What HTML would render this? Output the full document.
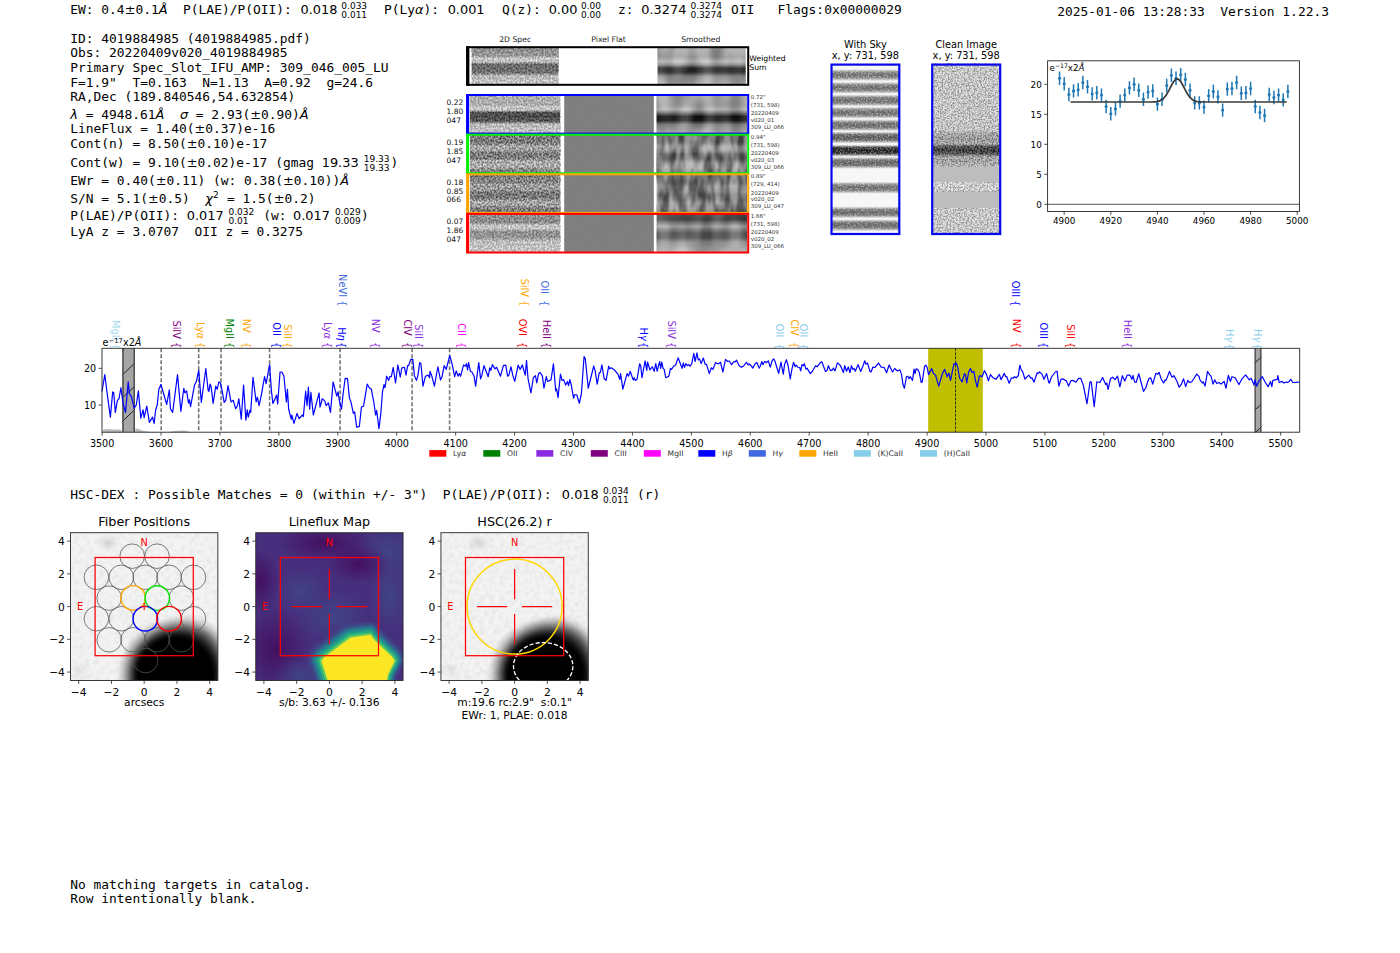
<!DOCTYPE html>
<html lang="en"><head><meta charset="utf-8"><title>HETDEX detection 4019884985</title>
<style>
html,body{margin:0;padding:0;background:#fff;}
body{width:1400px;height:953px;overflow:hidden;position:relative;}
svg{position:absolute;left:0;top:0;display:block;}
text{white-space:pre;}
.m{font-family:'DejaVu Sans Mono','Liberation Mono',monospace;font-size:12.9px;fill:#000;}
.s{font-family:'DejaVu Sans','Liberation Sans',sans-serif;fill:#000;}
.i{font-family:'DejaVu Sans','Liberation Sans',sans-serif;font-style:italic;}
</style></head><body>
<svg width="1400" height="953" viewBox="0 0 1400 953">
<text x="70.30" y="14.00" class="m"><tspan dx="0">EW: 0.4</tspan><tspan class="s" font-size="12.9" dx="0">±</tspan><tspan dx="0">0.1</tspan><tspan class="i" font-size="12.9">Å</tspan><tspan dx="0">  P(LAE)/P(OII): </tspan><tspan class="s" font-size="12.9" dx="1.0">0.018</tspan></text>
<text x="341.30" y="9.20" class="s" font-size="9.03">0.033</text><text x="341.30" y="18.20" class="s" font-size="9.03">0.011</text>
<text x="384.00" y="14.00" class="m"><tspan dx="0">P(Ly</tspan><tspan class="i" font-size="12.9">α</tspan><tspan dx="0">): </tspan><tspan class="s" font-size="12.9" dx="0.8">0.001</tspan><tspan dx="2.0">  Q(z): </tspan><tspan class="s" font-size="12.9" dx="0">0.00</tspan></text>
<text x="581.00" y="9.20" class="s" font-size="9.03">0.00</text><text x="581.00" y="18.20" class="s" font-size="9.03">0.00</text>
<text x="618.00" y="14.00" class="m"><tspan dx="0">z: </tspan><tspan class="s" font-size="12.9" dx="0">0.3274</tspan></text>
<text x="690.50" y="9.20" class="s" font-size="9.03">0.3274</text><text x="690.50" y="18.20" class="s" font-size="9.03">0.3274</text>
<text x="731.00" y="14.00" class="m"><tspan dx="0">OII   Flags:0x00000029</tspan></text>
<text x="1057.30" y="16.10" class="m"><tspan dx="0">2025-01-06 13:28:33  Version 1.22.3</tspan></text>
<text x="70.30" y="42.50" class="m"><tspan dx="0">ID: 4019884985 (4019884985.pdf)</tspan></text>
<text x="70.30" y="57.20" class="m"><tspan dx="0">Obs: 20220409v020_4019884985</tspan></text>
<text x="70.30" y="71.90" class="m"><tspan dx="0">Primary Spec_Slot_IFU_AMP: 309_046_005_LU</tspan></text>
<text x="70.30" y="86.60" class="m"><tspan dx="0">F=1.9"  T=0.163  N=1.13  A=0.92  g=24.6</tspan></text>
<text x="70.30" y="101.30" class="m"><tspan dx="0">RA,Dec (189.840546,54.632854)</tspan></text>
<text x="70.30" y="118.70" class="m"><tspan class="i" font-size="12.9">λ</tspan><tspan dx="0"> = 4948.61</tspan><tspan class="i" font-size="12.9">Å</tspan><tspan dx="0">  </tspan><tspan class="i" font-size="12.9">σ</tspan><tspan dx="0"> = 2.93(</tspan><tspan class="s" font-size="12.9" dx="0">±</tspan><tspan dx="0">0.90)</tspan><tspan class="i" font-size="12.9">Å</tspan></text>
<text x="70.30" y="133.30" class="m"><tspan dx="0">LineFlux = 1.40(</tspan><tspan class="s" font-size="12.9" dx="0">±</tspan><tspan dx="0">0.37)e-16</tspan></text>
<text x="70.30" y="148.00" class="m"><tspan dx="0">Cont(n) = 8.50(</tspan><tspan class="s" font-size="12.9" dx="0">±</tspan><tspan dx="0">0.10)e-17</tspan></text>
<text x="70.30" y="166.90" class="m"><tspan dx="0">Cont(w) = 9.10(</tspan><tspan class="s" font-size="12.9" dx="0">±</tspan><tspan dx="0">0.02)e-17 (gmag </tspan><tspan class="s" font-size="12.9" dx="0">19.33</tspan></text>
<text x="363.70" y="162.10" class="s" font-size="9.03">19.33</text><text x="363.70" y="171.10" class="s" font-size="9.03">19.33</text>
<text x="390.50" y="166.90" class="m"><tspan dx="0">)</tspan></text>
<text x="70.30" y="184.50" class="m"><tspan dx="0">EWr = 0.40(</tspan><tspan class="s" font-size="12.9" dx="0">±</tspan><tspan dx="0">0.11) (w: 0.38(</tspan><tspan class="s" font-size="12.9" dx="0">±</tspan><tspan dx="0">0.10))</tspan><tspan class="i" font-size="12.9">Å</tspan></text>
<text x="70.30" y="202.50" class="m"><tspan dx="0">S/N = 5.1(</tspan><tspan class="s" font-size="12.9" dx="0">±</tspan><tspan dx="0">0.5)  </tspan><tspan class="i" font-size="12.9">χ</tspan><tspan class="s" font-size="9.03" dy="-4.7">2</tspan><tspan dy="4.7" font-size="1"> </tspan><tspan dx="0"> = 1.5(</tspan><tspan class="s" font-size="12.9" dx="0">±</tspan><tspan dx="0">0.2)</tspan></text>
<text x="70.30" y="219.60" class="m"><tspan dx="0">P(LAE)/P(OII): </tspan><tspan class="s" font-size="12.9" dx="0">0.017</tspan></text>
<text x="228.50" y="214.80" class="s" font-size="9.03">0.032</text><text x="228.50" y="223.80" class="s" font-size="9.03">0.01</text>
<text x="263.20" y="219.60" class="m"><tspan dx="0">(w: </tspan><tspan class="s" font-size="12.9" dx="-1.2">0.017</tspan></text>
<text x="335.00" y="214.80" class="s" font-size="9.03">0.029</text><text x="335.00" y="223.80" class="s" font-size="9.03">0.009</text>
<text x="361.00" y="219.60" class="m"><tspan dx="0">)</tspan></text>
<text x="70.30" y="236.30" class="m"><tspan dx="0">LyA z = 3.0707  OII z = 0.3275</tspan></text>
<text x="70.30" y="498.50" class="m"><tspan dx="0">HSC-DEX : Possible Matches = 0 (within +/- 3")  P(LAE)/P(OII): </tspan><tspan class="s" font-size="12.9" dx="2.6">0.018</tspan></text>
<text x="603.00" y="493.70" class="s" font-size="9.03">0.034</text><text x="603.00" y="502.70" class="s" font-size="9.03">0.011</text>
<text x="637.00" y="498.50" class="m"><tspan dx="0">(r)</tspan></text>
<text x="70.30" y="888.50" class="m"><tspan dx="0">No matching targets in catalog.</tspan></text>
<text x="70.30" y="903.20" class="m"><tspan dx="0">Row intentionally blank.</tspan></text>
<g id="cutouts"><defs>
<filter id="nzA" x="0" y="0" width="100%" height="100%" color-interpolation-filters="sRGB"><feTurbulence type="fractalNoise" baseFrequency="0.55 0.5" numOctaves="2" seed="7"/><feColorMatrix type="matrix" values="3.0 0 0 0 -1.0  3.0 0 0 0 -1.0  3.0 0 0 0 -1.0  0 0 0 0 0.36"/></filter>
<filter id="nzB" x="0" y="0" width="100%" height="100%" color-interpolation-filters="sRGB"><feTurbulence type="fractalNoise" baseFrequency="0.55 0.5" numOctaves="2" seed="23"/><feColorMatrix type="matrix" values="3.0 0 0 0 -1.0  3.0 0 0 0 -1.0  3.0 0 0 0 -1.0  0 0 0 0 0.24"/></filter>
<filter id="nzS" x="0" y="0" width="100%" height="100%" color-interpolation-filters="sRGB"><feTurbulence type="fractalNoise" baseFrequency="0.13 0.045" numOctaves="2" seed="11"/><feColorMatrix type="matrix" values="2.4 0 0 0 -0.7  2.4 0 0 0 -0.7  2.4 0 0 0 -0.7  0 0 0 0 0.34"/></filter>
<filter id="nzS2" x="0" y="0" width="100%" height="100%" color-interpolation-filters="sRGB"><feTurbulence type="fractalNoise" baseFrequency="0.07 0.03" numOctaves="1" seed="4"/><feColorMatrix type="matrix" values="3.0 0 0 0 -1.0  3.0 0 0 0 -1.0  3.0 0 0 0 -1.0  0 0 0 0 0.2"/></filter>
<filter id="nzF" x="0" y="0" width="100%" height="100%" color-interpolation-filters="sRGB"><feTurbulence type="fractalNoise" baseFrequency="0.7" numOctaves="1" seed="2"/><feColorMatrix type="matrix" values="1 0 0 0 0  1 0 0 0 0  1 0 0 0 0  0 0 0 0 0.06"/></filter>
</defs>
<defs><linearGradient id="d2w" x1="0" y1="0" x2="0" y2="1"><stop offset="0.000" stop-color="#969696"/><stop offset="0.220" stop-color="#9b9b9b"/><stop offset="0.300" stop-color="#e1e1e1"/><stop offset="0.380" stop-color="#d7d7d7"/><stop offset="0.460" stop-color="#646464"/><stop offset="0.680" stop-color="#696969"/><stop offset="0.760" stop-color="#c8c8c8"/><stop offset="1.000" stop-color="#dedede"/></linearGradient><linearGradient id="d2b" x1="0" y1="0" x2="0" y2="1"><stop offset="0.000" stop-color="#bebebe"/><stop offset="0.250" stop-color="#b9b9b9"/><stop offset="0.320" stop-color="#dedede"/><stop offset="0.390" stop-color="#d7d7d7"/><stop offset="0.460" stop-color="#3c3c3c"/><stop offset="0.680" stop-color="#464646"/><stop offset="0.760" stop-color="#cdcdcd"/><stop offset="1.000" stop-color="#d7d7d7"/></linearGradient><linearGradient id="d2g" x1="0" y1="0" x2="0" y2="1"><stop offset="0.000" stop-color="#787878"/><stop offset="0.200" stop-color="#737373"/><stop offset="0.300" stop-color="#bebebe"/><stop offset="0.400" stop-color="#b4b4b4"/><stop offset="0.480" stop-color="#787878"/><stop offset="0.620" stop-color="#7d7d7d"/><stop offset="0.700" stop-color="#c8c8c8"/><stop offset="0.840" stop-color="#c3c3c3"/><stop offset="0.920" stop-color="#878787"/><stop offset="1.000" stop-color="#828282"/></linearGradient><linearGradient id="d2o" x1="0" y1="0" x2="0" y2="1"><stop offset="0.000" stop-color="#7d7d7d"/><stop offset="0.200" stop-color="#828282"/><stop offset="0.280" stop-color="#afafaf"/><stop offset="0.400" stop-color="#aaaaaa"/><stop offset="0.480" stop-color="#6e6e6e"/><stop offset="0.620" stop-color="#737373"/><stop offset="0.700" stop-color="#b9b9b9"/><stop offset="0.820" stop-color="#b4b4b4"/><stop offset="0.900" stop-color="#787878"/><stop offset="1.000" stop-color="#787878"/></linearGradient><linearGradient id="d2r" x1="0" y1="0" x2="0" y2="1"><stop offset="0.000" stop-color="#969696"/><stop offset="0.220" stop-color="#8c8c8c"/><stop offset="0.300" stop-color="#dedede"/><stop offset="0.380" stop-color="#d7d7d7"/><stop offset="0.460" stop-color="#969696"/><stop offset="0.620" stop-color="#9b9b9b"/><stop offset="0.720" stop-color="#d2d2d2"/><stop offset="1.000" stop-color="#dadada"/></linearGradient><linearGradient id="smw" x1="0" y1="0" x2="0" y2="1"><stop offset="0.000" stop-color="#a5a5a5"/><stop offset="0.250" stop-color="#969696"/><stop offset="0.380" stop-color="#bebebe"/><stop offset="0.460" stop-color="#969696"/><stop offset="0.560" stop-color="#282828"/><stop offset="0.660" stop-color="#2d2d2d"/><stop offset="0.780" stop-color="#969696"/><stop offset="1.000" stop-color="#b9b9b9"/></linearGradient><linearGradient id="smb" x1="0" y1="0" x2="0" y2="1"><stop offset="0.000" stop-color="#aaaaaa"/><stop offset="0.250" stop-color="#a0a0a0"/><stop offset="0.380" stop-color="#b9b9b9"/><stop offset="0.460" stop-color="#787878"/><stop offset="0.560" stop-color="#121212"/><stop offset="0.660" stop-color="#161616"/><stop offset="0.780" stop-color="#8c8c8c"/><stop offset="1.000" stop-color="#b4b4b4"/></linearGradient><linearGradient id="smg" x1="0" y1="0" x2="0" y2="1"><stop offset="0.000" stop-color="#5f5f5f"/><stop offset="0.180" stop-color="#5a5a5a"/><stop offset="0.320" stop-color="#969696"/><stop offset="0.420" stop-color="#8c8c8c"/><stop offset="0.520" stop-color="#5f5f5f"/><stop offset="0.620" stop-color="#646464"/><stop offset="0.740" stop-color="#969696"/><stop offset="0.860" stop-color="#969696"/><stop offset="1.000" stop-color="#6e6e6e"/></linearGradient><linearGradient id="smo" x1="0" y1="0" x2="0" y2="1"><stop offset="0.000" stop-color="#646464"/><stop offset="0.200" stop-color="#6e6e6e"/><stop offset="0.320" stop-color="#8c8c8c"/><stop offset="0.440" stop-color="#7d7d7d"/><stop offset="0.540" stop-color="#5f5f5f"/><stop offset="0.640" stop-color="#696969"/><stop offset="0.760" stop-color="#8c8c8c"/><stop offset="0.880" stop-color="#828282"/><stop offset="1.000" stop-color="#646464"/></linearGradient><linearGradient id="smr" x1="0" y1="0" x2="0" y2="1"><stop offset="0.000" stop-color="#464646"/><stop offset="0.140" stop-color="#3c3c3c"/><stop offset="0.240" stop-color="#787878"/><stop offset="0.320" stop-color="#a5a5a5"/><stop offset="0.400" stop-color="#828282"/><stop offset="0.500" stop-color="#555555"/><stop offset="0.620" stop-color="#5a5a5a"/><stop offset="0.740" stop-color="#969696"/><stop offset="1.000" stop-color="#b9b9b9"/></linearGradient></defs>
<text x="515.2" y="41.8" text-anchor="middle" class="s" font-size="7.7" style="fill:#222">2D Spec</text>
<text x="608.6" y="41.8" text-anchor="middle" class="s" font-size="7.7" style="fill:#222">Pixel Flat</text>
<text x="700.8" y="41.8" text-anchor="middle" class="s" font-size="7.7" style="fill:#222">Smoothed</text>
<rect x="471.6" y="47.5" width="87.0" height="37" fill="url(#d2w)"/><rect x="471.6" y="47.5" width="87.0" height="37" filter="url(#nzB)"/>
<rect x="657.6" y="47.5" width="88.0" height="37" fill="url(#smw)"/><rect x="657.6" y="47.5" width="88.0" height="37" filter="url(#nzS2)"/>
<rect x="467.2" y="47.2" width="281.0" height="37.6" fill="none" stroke="#000" stroke-width="2"/>
<rect x="466.2" y="46.2" width="3.2" height="39.6" fill="#000"/>
<text x="749.3" y="61.2" class="s" font-size="7.7">Weighted</text><text x="749.3" y="69.6" class="s" font-size="7.7">Sum</text>
<rect x="470.0" y="95.2" width="90.2" height="38.0" fill="url(#d2b)"/><rect x="470.0" y="95.2" width="90.2" height="38.0" filter="url(#nzB)"/>
<rect x="564.2" y="95.2" width="89.6" height="38.0" fill="#7f7f7f"/><rect x="564.2" y="95.2" width="89.6" height="38.0" filter="url(#nzF)"/>
<rect x="656.6" y="95.2" width="90.4" height="38.0" fill="url(#smb)"/><rect x="656.6" y="95.2" width="90.4" height="38.0" filter="url(#nzS2)"/>
<rect x="470.0" y="134.89999999999998" width="90.2" height="38.0" fill="url(#d2g)"/><rect x="470.0" y="134.89999999999998" width="90.2" height="38.0" filter="url(#nzA)"/>
<rect x="564.2" y="134.9" width="89.6" height="38.0" fill="#7f7f7f"/><rect x="564.2" y="134.9" width="89.6" height="38.0" filter="url(#nzF)"/>
<rect x="656.6" y="134.89999999999998" width="90.4" height="38.0" fill="url(#smg)"/><rect x="656.6" y="134.89999999999998" width="90.4" height="38.0" filter="url(#nzS)"/>
<rect x="470.0" y="174.5" width="90.2" height="38.0" fill="url(#d2o)"/><rect x="470.0" y="174.5" width="90.2" height="38.0" filter="url(#nzA)"/>
<rect x="564.2" y="174.5" width="89.6" height="38.0" fill="#7f7f7f"/><rect x="564.2" y="174.5" width="89.6" height="38.0" filter="url(#nzF)"/>
<rect x="656.6" y="174.5" width="90.4" height="38.0" fill="url(#smo)"/><rect x="656.6" y="174.5" width="90.4" height="38.0" filter="url(#nzS)"/>
<rect x="470.0" y="214.1" width="90.2" height="38.0" fill="url(#d2r)"/><rect x="470.0" y="214.1" width="90.2" height="38.0" filter="url(#nzB)"/>
<rect x="564.2" y="214.1" width="89.6" height="38.0" fill="#7f7f7f"/><rect x="564.2" y="214.1" width="89.6" height="38.0" filter="url(#nzF)"/>
<rect x="656.6" y="214.1" width="90.4" height="38.0" fill="url(#smr)"/><rect x="656.6" y="214.1" width="90.4" height="38.0" filter="url(#nzS2)"/>
<rect x="467.2" y="95.0" width="281.0" height="38.6" fill="none" stroke="#0000ff" stroke-width="2"/>
<rect x="466.2" y="94.0" width="3" height="40.2" fill="#0000ff"/>
<text x="446.6" y="105.4" class="s" font-size="7.5" style="fill:#111">0.22</text>
<text x="446.6" y="114.2" class="s" font-size="7.5" style="fill:#111">1.80</text>
<text x="446.6" y="123.0" class="s" font-size="7.5" style="fill:#111">047</text>
<text x="750.8" y="98.9" class="s" font-size="5.5" style="fill:#333">0.72"</text>
<text x="750.8" y="106.8" class="s" font-size="5.5" style="fill:#333">(731, 598)</text>
<text x="750.8" y="115.2" class="s" font-size="5.5" style="fill:#333">20220409</text>
<text x="750.8" y="121.8" class="s" font-size="5.5" style="fill:#333">v020_01</text>
<text x="750.8" y="128.9" class="s" font-size="5.5" style="fill:#333">309_LU_066</text>
<rect x="467.2" y="134.7" width="281.0" height="38.6" fill="none" stroke="#05f005" stroke-width="2"/>
<rect x="466.2" y="133.7" width="3" height="40.2" fill="#05f005"/>
<text x="446.6" y="145.1" class="s" font-size="7.5" style="fill:#111">0.19</text>
<text x="446.6" y="153.9" class="s" font-size="7.5" style="fill:#111">1.85</text>
<text x="446.6" y="162.7" class="s" font-size="7.5" style="fill:#111">047</text>
<text x="750.8" y="138.6" class="s" font-size="5.5" style="fill:#333">0.94"</text>
<text x="750.8" y="146.5" class="s" font-size="5.5" style="fill:#333">(731, 598)</text>
<text x="750.8" y="154.9" class="s" font-size="5.5" style="fill:#333">20220409</text>
<text x="750.8" y="161.5" class="s" font-size="5.5" style="fill:#333">v020_03</text>
<text x="750.8" y="168.6" class="s" font-size="5.5" style="fill:#333">309_LU_066</text>
<rect x="467.2" y="174.3" width="281.0" height="38.6" fill="none" stroke="#ffa500" stroke-width="2"/>
<rect x="466.2" y="173.3" width="3" height="40.2" fill="#ffa500"/>
<text x="446.6" y="184.7" class="s" font-size="7.5" style="fill:#111">0.18</text>
<text x="446.6" y="193.5" class="s" font-size="7.5" style="fill:#111">0.85</text>
<text x="446.6" y="202.3" class="s" font-size="7.5" style="fill:#111">066</text>
<text x="750.8" y="178.2" class="s" font-size="5.5" style="fill:#333">0.89"</text>
<text x="750.8" y="186.1" class="s" font-size="5.5" style="fill:#333">(729, 414)</text>
<text x="750.8" y="194.5" class="s" font-size="5.5" style="fill:#333">20220409</text>
<text x="750.8" y="201.1" class="s" font-size="5.5" style="fill:#333">v020_02</text>
<text x="750.8" y="208.2" class="s" font-size="5.5" style="fill:#333">309_LU_047</text>
<rect x="467.2" y="213.9" width="281.0" height="38.6" fill="none" stroke="#ff0000" stroke-width="2"/>
<rect x="466.2" y="212.9" width="3" height="40.2" fill="#ff0000"/>
<text x="446.6" y="224.3" class="s" font-size="7.5" style="fill:#111">0.07</text>
<text x="446.6" y="233.1" class="s" font-size="7.5" style="fill:#111">1.86</text>
<text x="446.6" y="241.9" class="s" font-size="7.5" style="fill:#111">047</text>
<text x="750.8" y="217.8" class="s" font-size="5.5" style="fill:#333">1.66"</text>
<text x="750.8" y="225.7" class="s" font-size="5.5" style="fill:#333">(731, 598)</text>
<text x="750.8" y="234.1" class="s" font-size="5.5" style="fill:#333">20220409</text>
<text x="750.8" y="240.7" class="s" font-size="5.5" style="fill:#333">v020_02</text>
<text x="750.8" y="247.8" class="s" font-size="5.5" style="fill:#333">309_LU_066</text></g>
<g id="sky"><defs>
<filter id="nzK" x="0" y="0" width="100%" height="100%" color-interpolation-filters="sRGB"><feTurbulence type="fractalNoise" baseFrequency="0.6" numOctaves="2" seed="31"/><feColorMatrix type="matrix" values="0 0 0 0 1  0 0 0 0 1  0 0 0 0 1  3.2 0 0 0 -1.45"/></filter>
<filter id="nzC" x="0" y="0" width="100%" height="100%" color-interpolation-filters="sRGB"><feTurbulence type="fractalNoise" baseFrequency="0.62" numOctaves="2" seed="17"/><feColorMatrix type="matrix" values="3.0 0 0 0 -0.85  3.0 0 0 0 -0.85  3.0 0 0 0 -0.85  0 0 0 0 0.32"/></filter>
</defs>
<defs><linearGradient id="skyg" x1="0" y1="0" x2="0" y2="1"><stop offset="0.000" stop-color="#f5f5f5"/><stop offset="0.032" stop-color="#f6f6f6"/><stop offset="0.050" stop-color="#828282"/><stop offset="0.067" stop-color="#696969"/><stop offset="0.083" stop-color="#828282"/><stop offset="0.102" stop-color="#f6f6f6"/><stop offset="0.106" stop-color="#f6f6f6"/><stop offset="0.124" stop-color="#7d7d7d"/><stop offset="0.141" stop-color="#646464"/><stop offset="0.157" stop-color="#7d7d7d"/><stop offset="0.176" stop-color="#f6f6f6"/><stop offset="0.180" stop-color="#f6f6f6"/><stop offset="0.198" stop-color="#7d7d7d"/><stop offset="0.215" stop-color="#646464"/><stop offset="0.231" stop-color="#7d7d7d"/><stop offset="0.250" stop-color="#f6f6f6"/><stop offset="0.251" stop-color="#f6f6f6"/><stop offset="0.270" stop-color="#7d7d7d"/><stop offset="0.286" stop-color="#646464"/><stop offset="0.303" stop-color="#7d7d7d"/><stop offset="0.321" stop-color="#f6f6f6"/><stop offset="0.324" stop-color="#f6f6f6"/><stop offset="0.343" stop-color="#787878"/><stop offset="0.359" stop-color="#5f5f5f"/><stop offset="0.376" stop-color="#787878"/><stop offset="0.394" stop-color="#f6f6f6"/><stop offset="0.396" stop-color="#f6f6f6"/><stop offset="0.414" stop-color="#696969"/><stop offset="0.431" stop-color="#505050"/><stop offset="0.447" stop-color="#696969"/><stop offset="0.466" stop-color="#f6f6f6"/><stop offset="0.473" stop-color="#f6f6f6"/><stop offset="0.491" stop-color="#323232"/><stop offset="0.508" stop-color="#191919"/><stop offset="0.524" stop-color="#323232"/><stop offset="0.543" stop-color="#f6f6f6"/><stop offset="0.544" stop-color="#f6f6f6"/><stop offset="0.562" stop-color="#737373"/><stop offset="0.579" stop-color="#5a5a5a"/><stop offset="0.595" stop-color="#737373"/><stop offset="0.614" stop-color="#f6f6f6"/><stop offset="0.689" stop-color="#f6f6f6"/><stop offset="0.708" stop-color="#7d7d7d"/><stop offset="0.724" stop-color="#646464"/><stop offset="0.740" stop-color="#7d7d7d"/><stop offset="0.759" stop-color="#f6f6f6"/><stop offset="0.833" stop-color="#f6f6f6"/><stop offset="0.852" stop-color="#787878"/><stop offset="0.868" stop-color="#5f5f5f"/><stop offset="0.884" stop-color="#787878"/><stop offset="0.903" stop-color="#f6f6f6"/><stop offset="0.908" stop-color="#f6f6f6"/><stop offset="0.926" stop-color="#787878"/><stop offset="0.943" stop-color="#5f5f5f"/><stop offset="0.959" stop-color="#787878"/><stop offset="0.978" stop-color="#f6f6f6"/><stop offset="1.000" stop-color="#f6f6f6"/></linearGradient>
<linearGradient id="clng" x1="0" y1="0" x2="0" y2="1"><stop offset="0.000" stop-color="#d4d4d4"/><stop offset="0.387" stop-color="#d0d0d0"/><stop offset="0.411" stop-color="#a5a5a5"/><stop offset="0.446" stop-color="#969696"/><stop offset="0.469" stop-color="#aaaaaa"/><stop offset="0.484" stop-color="#323232"/><stop offset="0.507" stop-color="#121212"/><stop offset="0.527" stop-color="#3c3c3c"/><stop offset="0.545" stop-color="#aaaaaa"/><stop offset="0.562" stop-color="#a0a0a0"/><stop offset="0.592" stop-color="#b4b4b4"/><stop offset="0.600" stop-color="#bebebe"/><stop offset="0.603" stop-color="#bdbdbd"/><stop offset="0.691" stop-color="#bdbdbd"/><stop offset="0.694" stop-color="#dedede"/><stop offset="0.743" stop-color="#dcdcdc"/><stop offset="0.746" stop-color="#bdbdbd"/><stop offset="0.840" stop-color="#bdbdbd"/><stop offset="0.842" stop-color="#d7d7d7"/><stop offset="1.000" stop-color="#d4d4d4"/></linearGradient></defs>
<text x="865.4" y="48.0" text-anchor="middle" class="s" font-size="9.8">With Sky</text><text x="865.4" y="58.9" text-anchor="middle" class="s" font-size="9.8">x, y: 731, 598</text>
<text x="966.2" y="48.0" text-anchor="middle" class="s" font-size="9.8">Clean Image</text><text x="966.2" y="58.9" text-anchor="middle" class="s" font-size="9.8">x, y: 731, 598</text>
<rect x="831.4" y="63.6" width="68" height="171.4" fill="url(#skyg)"/><rect x="831.4" y="63.6" width="68" height="171.4" filter="url(#nzK)" opacity="0.45"/>
<rect x="932.1" y="63.6" width="68.2" height="171.4" fill="url(#clng)"/>
<rect x="932.1" y="63.6" width="68.2" height="103.2" filter="url(#nzC)"/>
<rect x="932.1" y="182.5" width="68.2" height="8.9" filter="url(#nzC)"/>
<rect x="932.1" y="208.0" width="68.2" height="27.0" filter="url(#nzC)"/>
<rect x="831.5" y="64.6" width="67.8" height="169.4" fill="none" stroke="#0808f0" stroke-width="2.2"/>
<rect x="932.2" y="64.6" width="68" height="169.4" fill="none" stroke="#0808f0" stroke-width="2.2"/></g>
<g id="fit"><rect x="1047.6" y="60.8" width="251.8" height="150.7" fill="#fff"/>
<path d="M1047.6,204.30 H1299.4" stroke="#555" stroke-width="1" fill="none"/>
<path d="M1059.54,71.60v13.4 M1064.20,77.00v13.4 M1068.86,87.80v13.4 M1073.52,84.20v13.4 M1078.18,83.00v13.4 M1082.84,75.80v13.4 M1087.50,80.00v13.4 M1092.16,87.20v13.4 M1096.82,86.00v13.4 M1101.48,88.40v13.4 M1106.14,99.80v13.4 M1110.80,107.00v13.4 M1115.46,102.20v13.4 M1120.12,94.40v13.4 M1124.78,88.40v13.4 M1129.44,81.20v13.4 M1134.10,77.60v13.4 M1138.76,83.60v13.4 M1143.42,92.60v13.4 M1148.08,85.40v13.4 M1152.74,84.20v13.4 M1157.40,97.40v13.4 M1162.06,92.60v13.4 M1166.72,78.80v13.4 M1171.38,68.60v13.4 M1176.04,71.60v13.4 M1180.70,68.00v13.4 M1185.36,72.80v13.4 M1190.02,83.60v13.4 M1194.68,96.20v13.4 M1199.34,96.20v13.4 M1204.00,100.40v13.4 M1208.66,89.00v13.4 M1213.32,84.80v13.4 M1217.98,90.20v13.4 M1222.64,103.40v13.4 M1227.30,82.40v13.4 M1231.96,81.80v13.4 M1236.62,75.80v13.4 M1241.28,86.60v13.4 M1245.94,86.00v13.4 M1250.60,81.80v13.4 M1255.26,99.80v13.4 M1259.92,105.80v13.4 M1264.58,108.80v13.4 M1269.24,87.80v13.4 M1273.90,90.80v13.4 M1278.56,88.40v13.4 M1283.22,93.20v13.4 M1287.88,84.80v13.4" stroke="#1f77b4" stroke-width="1.5" fill="none"/>
<g fill="#1f77b4"><circle cx="1059.54" cy="78.30" r="1.55"/><circle cx="1064.20" cy="83.70" r="1.55"/><circle cx="1068.86" cy="94.50" r="1.55"/><circle cx="1073.52" cy="90.90" r="1.55"/><circle cx="1078.18" cy="89.70" r="1.55"/><circle cx="1082.84" cy="82.50" r="1.55"/><circle cx="1087.50" cy="86.70" r="1.55"/><circle cx="1092.16" cy="93.90" r="1.55"/><circle cx="1096.82" cy="92.70" r="1.55"/><circle cx="1101.48" cy="95.10" r="1.55"/><circle cx="1106.14" cy="106.50" r="1.55"/><circle cx="1110.80" cy="113.70" r="1.55"/><circle cx="1115.46" cy="108.90" r="1.55"/><circle cx="1120.12" cy="101.10" r="1.55"/><circle cx="1124.78" cy="95.10" r="1.55"/><circle cx="1129.44" cy="87.90" r="1.55"/><circle cx="1134.10" cy="84.30" r="1.55"/><circle cx="1138.76" cy="90.30" r="1.55"/><circle cx="1143.42" cy="99.30" r="1.55"/><circle cx="1148.08" cy="92.10" r="1.55"/><circle cx="1152.74" cy="90.90" r="1.55"/><circle cx="1157.40" cy="104.10" r="1.55"/><circle cx="1162.06" cy="99.30" r="1.55"/><circle cx="1166.72" cy="85.50" r="1.55"/><circle cx="1171.38" cy="75.30" r="1.55"/><circle cx="1176.04" cy="78.30" r="1.55"/><circle cx="1180.70" cy="74.70" r="1.55"/><circle cx="1185.36" cy="79.50" r="1.55"/><circle cx="1190.02" cy="90.30" r="1.55"/><circle cx="1194.68" cy="102.90" r="1.55"/><circle cx="1199.34" cy="102.90" r="1.55"/><circle cx="1204.00" cy="107.10" r="1.55"/><circle cx="1208.66" cy="95.70" r="1.55"/><circle cx="1213.32" cy="91.50" r="1.55"/><circle cx="1217.98" cy="96.90" r="1.55"/><circle cx="1222.64" cy="110.10" r="1.55"/><circle cx="1227.30" cy="89.10" r="1.55"/><circle cx="1231.96" cy="88.50" r="1.55"/><circle cx="1236.62" cy="82.50" r="1.55"/><circle cx="1241.28" cy="93.30" r="1.55"/><circle cx="1245.94" cy="92.70" r="1.55"/><circle cx="1250.60" cy="88.50" r="1.55"/><circle cx="1255.26" cy="106.50" r="1.55"/><circle cx="1259.92" cy="112.50" r="1.55"/><circle cx="1264.58" cy="115.50" r="1.55"/><circle cx="1269.24" cy="94.50" r="1.55"/><circle cx="1273.90" cy="97.50" r="1.55"/><circle cx="1278.56" cy="95.10" r="1.55"/><circle cx="1283.22" cy="99.90" r="1.55"/><circle cx="1287.88" cy="91.50" r="1.55"/></g>
<path d="M1070.49,102.00 L1071.19,102.00 L1073.52,102.00 L1075.85,102.00 L1078.18,102.00 L1080.51,102.00 L1082.84,102.00 L1085.17,102.00 L1087.50,102.00 L1089.83,102.00 L1092.16,102.00 L1094.49,102.00 L1096.82,102.00 L1099.15,102.00 L1101.48,102.00 L1103.81,102.00 L1106.14,102.00 L1108.47,102.00 L1110.80,102.00 L1113.13,102.00 L1115.46,102.00 L1117.79,102.00 L1120.12,102.00 L1122.45,102.00 L1124.78,102.00 L1127.11,102.00 L1129.44,102.00 L1131.77,102.00 L1134.10,102.00 L1136.43,102.00 L1138.76,102.00 L1141.09,102.00 L1143.42,102.00 L1145.75,102.00 L1148.08,101.99 L1150.41,101.98 L1152.74,101.94 L1155.07,101.82 L1157.40,101.52 L1159.73,100.88 L1162.06,99.62 L1164.39,97.46 L1166.72,94.22 L1169.05,90.04 L1171.38,85.49 L1173.71,81.53 L1176.04,79.21 L1178.37,79.21 L1180.70,81.53 L1183.03,85.49 L1185.36,90.04 L1187.69,94.22 L1190.02,97.46 L1192.35,99.62 L1194.68,100.88 L1197.01,101.52 L1199.34,101.82 L1201.67,101.94 L1204.00,101.98 L1206.33,101.99 L1208.66,102.00 L1210.99,102.00 L1213.32,102.00 L1215.65,102.00 L1217.98,102.00 L1220.31,102.00 L1222.64,102.00 L1224.97,102.00 L1227.30,102.00 L1229.63,102.00 L1231.96,102.00 L1234.29,102.00 L1236.62,102.00 L1238.95,102.00 L1241.28,102.00 L1243.61,102.00 L1245.94,102.00 L1248.27,102.00 L1250.60,102.00 L1252.93,102.00 L1255.26,102.00 L1257.59,102.00 L1259.92,102.00 L1262.25,102.00 L1264.58,102.00 L1266.91,102.00 L1269.24,102.00 L1271.57,102.00 L1273.90,102.00 L1276.23,102.00 L1278.56,102.00 L1280.89,102.00 L1283.22,102.00 L1285.55,102.00 L1286.72,102.00" stroke="#3a3a3a" stroke-width="1.7" fill="none" stroke-linejoin="round"/>
<rect x="1047.6" y="60.8" width="251.8" height="150.7" fill="none" stroke="#262626" stroke-width="0.9"/>
<text x="1064.20" y="223.9" text-anchor="middle" class="s" font-size="8.8">4900</text>
<text x="1110.80" y="223.9" text-anchor="middle" class="s" font-size="8.8">4920</text>
<text x="1157.40" y="223.9" text-anchor="middle" class="s" font-size="8.8">4940</text>
<text x="1204.00" y="223.9" text-anchor="middle" class="s" font-size="8.8">4960</text>
<text x="1250.60" y="223.9" text-anchor="middle" class="s" font-size="8.8">4980</text>
<text x="1297.20" y="223.9" text-anchor="middle" class="s" font-size="8.8">5000</text>
<text x="1041.8" y="207.50" text-anchor="end" class="s" font-size="8.8">0</text>
<text x="1041.8" y="177.50" text-anchor="end" class="s" font-size="8.8">5</text>
<text x="1041.8" y="147.50" text-anchor="end" class="s" font-size="8.8">10</text>
<text x="1041.8" y="117.50" text-anchor="end" class="s" font-size="8.8">15</text>
<text x="1041.8" y="87.50" text-anchor="end" class="s" font-size="8.8">20</text>
<path d="M1064.20,211.5v3.4 M1110.80,211.5v3.4 M1157.40,211.5v3.4 M1204.00,211.5v3.4 M1250.60,211.5v3.4 M1297.20,211.5v3.4 M1047.6,204.30h-3.4 M1047.6,174.30h-3.4 M1047.6,144.30h-3.4 M1047.6,114.30h-3.4 M1047.6,84.30h-3.4" stroke="#262626" stroke-width="0.8" fill="none"/>
<text x="1049.6" y="71.0" class="s" font-size="8.7">e<tspan font-size="6.1" dy="-3.3">−17</tspan><tspan dy="3.3">x2</tspan><tspan font-style="italic">Å</tspan></text></g>
<g id="spectrum"><text transform="translate(111.5,349.8) rotate(90)" text-anchor="end" class="s" font-size="9.8" style="fill:#87ceeb" fill-opacity="0.75">MgII {</text>
<text transform="translate(172.5,348.3) rotate(90)" text-anchor="end" class="s" font-size="9.8" style="fill:#800080" fill-opacity="1">SiIV {</text>
<text transform="translate(197.1,348.3) rotate(90)" text-anchor="end" class="s" font-size="9.8" style="fill:#ffa500" fill-opacity="1">Ly<tspan font-style="italic">α</tspan> {</text>
<text transform="translate(225.7,348.3) rotate(90)" text-anchor="end" class="s" font-size="9.8" style="fill:#008000" fill-opacity="1">MgII {</text>
<text transform="translate(242.9,348.3) rotate(90)" text-anchor="end" class="s" font-size="9.8" style="fill:#ffa500" fill-opacity="1">NV   {</text>
<text transform="translate(272.5,348.3) rotate(90)" text-anchor="end" class="s" font-size="9.8" style="fill:#0000ff" fill-opacity="1">OII  {</text>
<text transform="translate(283.5,348.3) rotate(90)" text-anchor="end" class="s" font-size="9.8" style="fill:#ffa500" fill-opacity="1">SiII {</text>
<text transform="translate(324.0,348.3) rotate(90)" text-anchor="end" class="s" font-size="9.8" style="fill:#8a2be2" fill-opacity="1">Ly<tspan font-style="italic">α</tspan> {</text>
<text transform="translate(337.8,348.3) rotate(90)" text-anchor="end" class="s" font-size="9.8" style="fill:#0000ff" fill-opacity="1">H<tspan font-style="italic">η</tspan><tspan dx="-1.8"> {</tspan></text>
<text transform="translate(338.5,306.4) rotate(90)" text-anchor="end" class="s" font-size="9.8" style="fill:#4169e1" fill-opacity="1">NeVI {</text>
<text transform="translate(372.0,348.3) rotate(90)" text-anchor="end" class="s" font-size="9.8" style="fill:#8a2be2" fill-opacity="1">NV   {</text>
<text transform="translate(403.9,348.3) rotate(90)" text-anchor="end" class="s" font-size="9.8" style="fill:#800080" fill-opacity="1">CIV  {</text>
<text transform="translate(414.8,348.3) rotate(90)" text-anchor="end" class="s" font-size="9.8" style="fill:#8a2be2" fill-opacity="1">SiII {</text>
<text transform="translate(458.4,348.3) rotate(90)" text-anchor="end" class="s" font-size="9.8" style="fill:#ff00ff" fill-opacity="1">CII  {</text>
<text transform="translate(519.2,348.3) rotate(90)" text-anchor="end" class="s" font-size="9.8" style="fill:#ff0000" fill-opacity="1">OVI  {</text>
<text transform="translate(521.3,306.4) rotate(90)" text-anchor="end" class="s" font-size="9.8" style="fill:#ffa500" fill-opacity="1">SiIV {</text>
<text transform="translate(543.0,348.3) rotate(90)" text-anchor="end" class="s" font-size="9.8" style="fill:#800080" fill-opacity="1">HeII {</text>
<text transform="translate(541.3,306.4) rotate(90)" text-anchor="end" class="s" font-size="9.8" style="fill:#4169e1" fill-opacity="1">OII  {</text>
<text transform="translate(640.2,348.3) rotate(90)" text-anchor="end" class="s" font-size="9.8" style="fill:#0000ff" fill-opacity="1">H<tspan font-style="italic">γ</tspan><tspan dx="-1.8"> {</tspan></text>
<text transform="translate(667.5,348.3) rotate(90)" text-anchor="end" class="s" font-size="9.8" style="fill:#8a2be2" fill-opacity="1">SiIV {</text>
<text transform="translate(776.2,349.8) rotate(90)" text-anchor="end" class="s" font-size="9.8" style="fill:#87ceeb" fill-opacity="1">OII  {</text>
<text transform="translate(790.7,348.3) rotate(90)" text-anchor="end" class="s" font-size="9.8" style="fill:#ffa500" fill-opacity="1">CIV  {</text>
<text transform="translate(800.4,349.8) rotate(90)" text-anchor="end" class="s" font-size="9.8" style="fill:#87ceeb" fill-opacity="1">OII  {</text>
<text transform="translate(1011.5,306.4) rotate(90)" text-anchor="end" class="s" font-size="9.8" style="fill:#0000ff" fill-opacity="1">OIII {</text>
<text transform="translate(1012.7,348.3) rotate(90)" text-anchor="end" class="s" font-size="9.8" style="fill:#ff0000" fill-opacity="1">NV   {</text>
<text transform="translate(1040.0,348.3) rotate(90)" text-anchor="end" class="s" font-size="9.8" style="fill:#0000ff" fill-opacity="1">OIII {</text>
<text transform="translate(1067.1,348.3) rotate(90)" text-anchor="end" class="s" font-size="9.8" style="fill:#ff0000" fill-opacity="1">SiII {</text>
<text transform="translate(1123.7,348.3) rotate(90)" text-anchor="end" class="s" font-size="9.8" style="fill:#8a2be2" fill-opacity="1">HeII {</text>
<text transform="translate(1225.5,349.8) rotate(90)" text-anchor="end" class="s" font-size="9.8" style="fill:#87ceeb" fill-opacity="1">H<tspan font-style="italic">γ</tspan><tspan dx="-1.8"> {</tspan></text>
<text transform="translate(1254.4,349.8) rotate(90)" text-anchor="end" class="s" font-size="9.8" style="fill:#87ceeb" fill-opacity="1">H<tspan font-style="italic">γ</tspan><tspan dx="-1.8"> {</tspan></text>
<rect x="102.0" y="348.3" width="1197.7" height="83.9" fill="#fff"/>
<rect x="928.2" y="348.3" width="54.6" height="83.9" fill="#bfbf00"/>
<rect x="122.3" y="348.3" width="12.6" height="83.9" fill="#a6a6a6"/>
<path d="M122.3,375 L134.9,363 M122.3,398 L134.9,386 M122.3,421.5 L134.9,409.5 M122.3,350.5 L124.6,348.3" stroke="#111" stroke-width="0.9" fill="none"/>
<path d="M123,348.3 V432.2 M134.2,348.3 V432.2" stroke="#4d4d4d" stroke-width="1.5" fill="none"/>
<rect x="1254.6" y="348.3" width="6.8" height="83.9" fill="#a6a6a6"/>
<path d="M1254.6,363 L1261.4,357 M1254.6,410 L1261.4,404.5 M1255.6,432.2 L1261.4,427" stroke="#111" stroke-width="0.9" fill="none"/>
<path d="M1255.2,348.3 V432.2 M1260.8,348.3 V432.2" stroke="#4d4d4d" stroke-width="1.3" fill="none"/>
<path d="M103,432.2 L103,429.5 L108,428.9 L114,429.6 L121,429.4 L122,432.2 Z M135,432.2 L135.5,428.2 L139,429 L142,430.4 L147,431.4 L152,432.2 Z M168,432.2 L174,431.1 L182,430.6 L187,430.8 L190,432.2 Z" fill="#bdbdbd"/>
<path d="M161.2,348.3 V432.2" stroke="#757575" stroke-width="1.6" stroke-dasharray="3.9,2.1" fill="none"/>
<path d="M198.7,348.3 V432.2" stroke="#757575" stroke-width="1.6" stroke-dasharray="3.9,2.1" fill="none"/>
<path d="M221.0,348.3 V432.2" stroke="#757575" stroke-width="1.6" stroke-dasharray="3.9,2.1" fill="none"/>
<path d="M269.6,348.3 V432.2" stroke="#757575" stroke-width="1.6" stroke-dasharray="3.9,2.1" fill="none"/>
<path d="M340.1,348.3 V432.2" stroke="#757575" stroke-width="1.6" stroke-dasharray="3.9,2.1" fill="none"/>
<path d="M412.1,348.3 V432.2" stroke="#757575" stroke-width="1.6" stroke-dasharray="3.9,2.1" fill="none"/>
<path d="M449.6,348.3 V432.2" stroke="#757575" stroke-width="1.6" stroke-dasharray="3.9,2.1" fill="none"/>
<path d="M955.5,348.3 V432.2" stroke="#111" stroke-width="0.8" stroke-dasharray="2.8,1.3" fill="none"/>
<path d="M101.99,391.4 L104.82,374.62 L107.44,395.59 L110.38,417.1 L112.69,391.92 L113.73,392.45 L115.31,412.38 L117.41,400.31 L118.98,398.74 L120.87,387.73 L123.17,403.99 L125.48,412.38 L128.21,381.96 L129.47,393.5 L131.36,396.64 L134.19,408.18 L136.29,405.03 L138.38,390.87 L140.8,418.15 L143.1,409.76 L144.15,417.62 L146.78,406.08 L149.4,422.34 L152.55,417.1 L154.12,423.39 L155.69,409.76 L157.27,405.03 L158.84,389.3 L160.94,384.58 L163.56,393.5 L166.71,404.51 L169.33,389.83 L170.38,408.71 L172.69,412.38 L177.51,374.62 L180.87,411.33 L183.8,388.25 L184.85,392.97 L186.64,390.87 L188.42,402.94 L189.47,399.79 L190.52,406.61 L194.5,385.1 L196.39,381.43 L198.7,370.42 L201.32,402.41 L205.83,368.53 L208.14,390.35 L208.98,391.4 L210.0,384.06 L211.05,386.15 L213.15,403.46 L215.77,386.15 L217.13,389.3 L218.92,381.96 L220.49,383.01 L222.06,390.35 L224.16,402.41 L225.73,400.31 L228.04,385.63 L230.98,401.89 L233.29,400.31 L235.7,408.71 L237.48,405.56 L238.85,398.74 L241.26,419.2 L243.57,385.1 L245.87,420.24 L247.24,409.76 L248.29,417.1 L249.86,410.28 L250.7,412.38 L253.01,377.24 L256.15,401.89 L257.41,397.17 L259.09,405.56 L261.4,394.55 L264.55,376.71 L266.12,383.53 L269.58,364.65 L271.36,390.35 L272.94,403.46 L276.61,395.07 L277.66,403.99 L280.07,371.99 L281.85,371.99 L283.95,376.19 L286.36,401.89 L287.41,389.3 L288.67,409.23 L291.29,419.2 L291.82,415.0 L293.92,423.39 L297.06,413.43 L299.16,418.67 L302.31,415.0 L303.36,416.57 L305.66,391.4 L307.03,405.56 L308.39,387.2 L309.65,409.23 L310.91,392.45 L313.32,415.0 L319.09,392.97 L320.0,407.13 L322.31,398.74 L324.72,400.84 L326.08,405.56 L328.39,402.94 L330.49,412.38 L333.11,381.96 L336.78,396.12 L338.04,391.92 L339.41,400.84 L341.5,409.23 L343.08,394.02 L345.17,378.29 L347.48,378.6 L349.37,397.69 L350.94,401.89 L353.36,413.43 L354.62,411.85 L356.71,427.06 L359.34,426.54 L361.43,407.13 L363.53,406.08 L367.2,384.06 L369.3,387.73 L371.4,389.3 L374.02,403.46 L375.59,415.0 L376.64,410.28 L378.95,428.64 L380.84,413.43 L382.41,392.45 L383.99,384.58 L385.03,387.73 L386.61,376.19 L388.71,380.38 L389.76,376.71 L391.33,376.71 L393.22,367.48 L395.52,383.01 L397.83,364.97 L400.24,377.24 L401.82,367.8 L404.44,367.27 L406.01,375.14 L407.59,365.7 L408.64,365.7 L410.73,359.41 L412.83,359.41 L414.41,375.66 L416.5,380.38 L418.08,374.62 L419.65,362.55 L420.91,363.6 L423.01,386.15 L425.42,376.19 L428.04,375.14 L429.62,377.76 L430.0,371.47 L431.57,375.14 L434.41,386.15 L437.87,366.75 L440.49,379.86 L442.06,376.71 L444.16,365.7 L446.26,369.37 L449.72,355.73 L452.03,363.6 L454.65,376.71 L456.22,370.94 L458.11,376.19 L459.37,373.57 L460.63,376.19 L463.57,364.97 L465.45,366.22 L466.5,363.6 L467.55,369.9 L468.6,362.55 L470.38,371.47 L471.96,371.99 L474.06,376.19 L475.63,386.15 L478.78,362.55 L480.56,378.81 L481.92,375.14 L484.02,365.7 L488.22,376.71 L489.79,367.8 L490.84,370.42 L492.41,364.65 L495.03,368.85 L496.61,367.27 L500.49,376.19 L503.43,365.7 L505.73,365.17 L507.62,376.19 L508.88,375.14 L510.98,366.75 L512.87,375.66 L514.76,381.43 L518.11,365.17 L520.21,369.37 L522.31,364.97 L525.24,375.14 L526.5,360.45 L528.08,378.81 L530.91,392.97 L533.32,377.76 L535.42,375.66 L536.78,383.01 L538.57,373.57 L540.0,372.52 L542.31,375.66 L543.99,388.25 L546.29,376.71 L547.55,381.43 L551.01,379.86 L553.43,363.92 L555.73,390.87 L556.57,388.78 L558.04,397.69 L560.45,374.09 L562.03,380.38 L563.6,379.65 L565.7,385.1 L567.48,381.43 L568.53,385.63 L569.9,379.65 L571.47,386.15 L573.57,398.22 L574.62,394.76 L576.71,394.76 L579.34,403.25 L581.43,393.5 L584.06,356.57 L585.31,358.88 L588.25,388.25 L593.71,366.01 L595.07,370.42 L597.17,384.06 L599.27,372.52 L600.31,372.52 L601.89,364.97 L604.2,378.81 L606.08,380.38 L608.71,366.22 L609.76,368.85 L611.33,367.8 L614.48,369.9 L618.15,374.62 L619.72,379.34 L620.56,373.57 L622.87,389.09 L627.06,373.57 L628.64,376.19 L630.21,371.26 L633.15,379.86 L634.2,377.76 L635.24,380.38 L637.03,379.34 L639.65,363.92 L640.7,365.7 L641.96,377.76 L645.1,360.98 L646.78,370.42 L647.52,362.03 L649.93,369.9 L650.0,369.9 L652.31,366.75 L654.2,371.26 L655.77,363.6 L657.13,371.26 L659.65,361.5 L660.7,368.32 L661.75,362.03 L663.11,368.32 L664.16,369.37 L665.73,377.76 L668.88,376.19 L670.45,368.32 L671.5,369.37 L673.6,366.22 L675.7,364.97 L678.11,357.83 L680.94,365.17 L681.99,368.32 L683.36,362.87 L684.41,367.48 L685.87,363.6 L687.24,365.7 L688.6,364.65 L690.07,366.22 L691.75,363.6 L693.85,353.43 L695.1,361.5 L696.99,352.8 L698.25,359.93 L699.51,358.88 L701.19,363.6 L703.29,358.04 L705.07,364.13 L706.64,364.65 L709.27,373.57 L711.36,367.8 L712.94,369.37 L715.56,362.55 L718.18,363.92 L720.49,362.24 L722.9,371.99 L725.52,359.41 L727.62,361.5 L729.2,360.98 L731.61,364.65 L733.92,361.5 L734.97,362.03 L736.54,360.24 L739.16,365.7 L741.47,367.27 L743.88,365.7 L746.5,362.24 L748.08,364.97 L749.13,363.92 L750.7,365.17 L752.8,368.11 L754.9,363.92 L756.99,362.55 L759.09,368.11 L760.0,366.75 L761.89,361.5 L762.94,364.65 L764.72,361.5 L766.29,362.55 L768.39,360.98 L770.28,367.06 L772.06,360.98 L773.64,358.88 L774.9,360.98 L776.78,367.27 L778.67,373.36 L780.98,362.03 L783.29,374.09 L784.65,364.13 L786.43,359.72 L788.32,366.75 L790.21,378.81 L791.99,368.85 L793.57,362.24 L795.14,366.75 L796.19,365.17 L797.97,367.27 L799.65,367.48 L800.7,370.94 L801.96,364.65 L803.53,365.7 L804.27,363.6 L805.94,369.16 L806.99,368.11 L810.35,373.57 L812.45,371.26 L815.59,365.7 L817.17,366.75 L819.27,364.13 L820.31,362.55 L821.89,361.82 L823.46,366.22 L825.56,371.47 L827.13,370.42 L828.39,365.7 L830.49,370.63 L832.38,369.9 L833.43,368.11 L835.0,370.94 L837.41,362.87 L839.72,364.65 L841.29,367.48 L843.39,372.52 L844.76,365.7 L846.54,371.26 L848.32,367.06 L850.0,372.52 L851.47,365.7 L852.83,369.37 L853.88,368.32 L855.24,371.26 L858.08,364.65 L860.7,371.47 L863.32,365.17 L864.69,360.77 L865.94,364.13 L867.52,363.08 L869.09,368.32 L870.0,371.47 L871.05,371.99 L872.94,367.06 L875.03,367.48 L878.6,363.08 L881.01,367.06 L884.16,367.48 L886.57,372.73 L889.09,364.97 L892.55,371.99 L894.65,368.53 L897.48,370.94 L899.9,369.9 L901.47,374.09 L903.04,384.58 L904.41,388.25 L906.5,376.71 L907.76,376.19 L909.02,378.6 L910.38,376.71 L912.48,380.38 L914.06,369.16 L915.1,373.57 L916.15,368.85 L917.73,369.58 L919.3,372.52 L921.19,382.48 L922.24,381.96 L924.55,366.22 L925.8,365.17 L927.17,367.48 L928.53,374.62 L931.68,368.53 L933.46,373.57 L935.56,375.14 L938.71,386.15 L942.38,373.57 L944.69,369.37 L947.1,376.71 L948.88,373.04 L950.56,380.38 L953.92,363.6 L955.17,364.65 L956.22,363.08 L957.59,366.75 L959.69,378.29 L962.1,381.96 L964.41,373.57 L965.45,374.62 L966.71,383.01 L968.6,371.99 L970.49,368.53 L971.96,372.52 L973.85,371.26 L975.42,380.38 L977.2,387.2 L979.3,376.19 L980.0,375.66 L982.1,376.71 L984.41,370.63 L986.5,374.62 L988.39,380.91 L990.49,374.62 L993.11,377.76 L995.94,379.34 L999.41,374.41 L1000.98,379.65 L1004.34,373.36 L1005.7,376.71 L1006.75,376.71 L1009.16,383.22 L1011.47,377.76 L1013.04,378.29 L1014.62,376.71 L1016.19,377.76 L1018.29,375.66 L1019.86,365.17 L1021.43,370.42 L1022.48,370.94 L1024.9,379.02 L1028.78,375.14 L1030.87,378.29 L1031.92,377.76 L1034.02,382.17 L1037.17,372.73 L1038.22,373.36 L1039.58,371.99 L1041.89,374.09 L1043.99,379.34 L1046.61,373.57 L1048.71,382.48 L1049.44,383.01 L1051.33,377.24 L1055.31,371.99 L1057.1,371.26 L1058.88,386.15 L1060.98,379.34 L1062.87,378.81 L1066.54,381.12 L1068.64,386.15 L1070.73,380.91 L1072.83,380.38 L1075.98,382.17 L1078.6,378.29 L1080.7,378.29 L1083.32,385.1 L1086.99,403.78 L1090.0,381.96 L1091.26,381.96 L1094.2,406.61 L1096.82,381.75 L1099.97,382.48 L1102.59,377.55 L1105.73,384.58 L1106.78,383.01 L1108.04,389.51 L1110.45,378.81 L1112.55,377.24 L1115.17,379.65 L1117.48,376.19 L1119.9,386.99 L1122.31,375.66 L1124.83,380.91 L1127.24,375.14 L1129.86,375.14 L1131.96,379.34 L1133.01,375.45 L1134.58,381.96 L1136.15,382.48 L1138.78,373.78 L1143.5,391.4 L1145.59,388.25 L1148.74,378.81 L1150.63,377.76 L1152.73,384.06 L1155.87,373.36 L1157.66,374.09 L1159.02,372.31 L1161.33,379.34 L1163.64,383.01 L1165.0,380.07 L1166.05,380.38 L1169.51,371.47 L1172.03,377.24 L1173.92,375.66 L1177.06,381.43 L1179.16,387.2 L1181.47,384.06 L1183.57,378.81 L1185.66,386.68 L1187.76,380.38 L1189.65,382.48 L1191.75,381.75 L1196.78,374.09 L1199.09,376.71 L1200.0,379.86 L1202.31,383.01 L1203.36,381.96 L1205.03,386.15 L1207.55,371.47 L1209.97,375.14 L1211.01,376.19 L1213.11,384.06 L1214.69,379.86 L1216.78,383.53 L1218.88,382.48 L1220.98,384.06 L1224.13,381.43 L1226.01,388.25 L1228.32,375.45 L1230.42,381.43 L1231.99,376.71 L1235.14,377.76 L1239.02,384.58 L1241.96,378.81 L1245.63,374.83 L1249.3,379.86 L1251.19,378.29 L1254.02,385.1 L1255.07,379.86 L1256.64,386.15 L1259.27,380.38 L1262.41,376.71 L1265.03,381.96 L1268.18,386.68 L1270.49,381.43 L1271.85,386.68 L1272.9,380.38 L1277.41,379.34 L1277.83,375.66 L1279.2,382.48 L1282.03,381.43 L1283.92,383.01 L1286.54,381.96 L1287.59,382.48 L1289.16,381.43 L1290.73,379.34 L1292.83,382.48 L1299.65,382.17" stroke="#0000ff" stroke-width="1.2" fill="none" stroke-linejoin="round"/>
<rect x="102.0" y="348.3" width="1197.7" height="83.9" fill="none" stroke="#262626" stroke-width="0.9"/>
<text x="102.10" y="446.6" text-anchor="middle" class="s" font-size="9.6">3500</text>
<text x="161.03" y="446.6" text-anchor="middle" class="s" font-size="9.6">3600</text>
<text x="219.95" y="446.6" text-anchor="middle" class="s" font-size="9.6">3700</text>
<text x="278.88" y="446.6" text-anchor="middle" class="s" font-size="9.6">3800</text>
<text x="337.80" y="446.6" text-anchor="middle" class="s" font-size="9.6">3900</text>
<text x="396.73" y="446.6" text-anchor="middle" class="s" font-size="9.6">4000</text>
<text x="455.65" y="446.6" text-anchor="middle" class="s" font-size="9.6">4100</text>
<text x="514.58" y="446.6" text-anchor="middle" class="s" font-size="9.6">4200</text>
<text x="573.50" y="446.6" text-anchor="middle" class="s" font-size="9.6">4300</text>
<text x="632.43" y="446.6" text-anchor="middle" class="s" font-size="9.6">4400</text>
<text x="691.35" y="446.6" text-anchor="middle" class="s" font-size="9.6">4500</text>
<text x="750.28" y="446.6" text-anchor="middle" class="s" font-size="9.6">4600</text>
<text x="809.20" y="446.6" text-anchor="middle" class="s" font-size="9.6">4700</text>
<text x="868.13" y="446.6" text-anchor="middle" class="s" font-size="9.6">4800</text>
<text x="927.05" y="446.6" text-anchor="middle" class="s" font-size="9.6">4900</text>
<text x="985.98" y="446.6" text-anchor="middle" class="s" font-size="9.6">5000</text>
<text x="1044.90" y="446.6" text-anchor="middle" class="s" font-size="9.6">5100</text>
<text x="1103.83" y="446.6" text-anchor="middle" class="s" font-size="9.6">5200</text>
<text x="1162.75" y="446.6" text-anchor="middle" class="s" font-size="9.6">5300</text>
<text x="1221.67" y="446.6" text-anchor="middle" class="s" font-size="9.6">5400</text>
<text x="1280.60" y="446.6" text-anchor="middle" class="s" font-size="9.6">5500</text>
<text x="96.2" y="408.55" text-anchor="end" class="s" font-size="9.6">10</text>
<text x="96.2" y="371.82" text-anchor="end" class="s" font-size="9.6">20</text>
<path d="M102.10,432.2 v3.4 M161.03,432.2 v3.4 M219.95,432.2 v3.4 M278.88,432.2 v3.4 M337.80,432.2 v3.4 M396.73,432.2 v3.4 M455.65,432.2 v3.4 M514.58,432.2 v3.4 M573.50,432.2 v3.4 M632.43,432.2 v3.4 M691.35,432.2 v3.4 M750.28,432.2 v3.4 M809.20,432.2 v3.4 M868.13,432.2 v3.4 M927.05,432.2 v3.4 M985.98,432.2 v3.4 M1044.90,432.2 v3.4 M1103.83,432.2 v3.4 M1162.75,432.2 v3.4 M1221.67,432.2 v3.4 M1280.60,432.2 v3.4 M102.0,405.05 h-3.4 M102.0,368.32 h-3.4" stroke="#262626" stroke-width="0.8" fill="none"/>
<text x="102.6" y="346.3" class="s" font-size="9.7">e<tspan font-size="6.8" dy="-3.7">−17</tspan><tspan dy="3.7">x2</tspan><tspan font-style="italic">Å</tspan></text>
<rect x="429.3" y="450.1" width="17" height="6.6" fill="#ff0000"/>
<text x="453.1" y="456" class="s" font-size="7.6" style="fill:#333">Ly<tspan font-style="italic">α</tspan></text>
<rect x="483.3" y="450.1" width="17" height="6.6" fill="#008000"/>
<text x="507.1" y="456" class="s" font-size="7.6" style="fill:#333">OII</text>
<rect x="536.3" y="450.1" width="17" height="6.6" fill="#8a2be2"/>
<text x="560.1" y="456" class="s" font-size="7.6" style="fill:#333">CIV</text>
<rect x="590.8" y="450.1" width="17" height="6.6" fill="#800080"/>
<text x="614.6" y="456" class="s" font-size="7.6" style="fill:#333">CIII</text>
<rect x="643.8" y="450.1" width="17" height="6.6" fill="#ff00ff"/>
<text x="667.6" y="456" class="s" font-size="7.6" style="fill:#333">MgII</text>
<rect x="698.3" y="450.1" width="17" height="6.6" fill="#0000ff"/>
<text x="722.1" y="456" class="s" font-size="7.6" style="fill:#333">H<tspan font-style="italic">β</tspan></text>
<rect x="748.8" y="450.1" width="17" height="6.6" fill="#4169e1"/>
<text x="772.6" y="456" class="s" font-size="7.6" style="fill:#333">H<tspan font-style="italic">γ</tspan></text>
<rect x="799.3" y="450.1" width="17" height="6.6" fill="#ffa500"/>
<text x="823.1" y="456" class="s" font-size="7.6" style="fill:#333">HeII</text>
<rect x="853.8" y="450.1" width="17" height="6.6" fill="#87ceeb"/>
<text x="877.6" y="456" class="s" font-size="7.6" style="fill:#333">(K)CaII</text>
<rect x="920.0" y="450.1" width="17" height="6.6" fill="#87ceeb"/>
<text x="943.8" y="456" class="s" font-size="7.6" style="fill:#333">(H)CaII</text></g>
<g id="stamps"><defs>
<radialGradient id="gal" gradientUnits="objectBoundingBox" cx="0.5" cy="0.5" r="0.5">
<stop offset="0" stop-color="#000"/><stop offset="0.63" stop-color="#000"/><stop offset="0.69" stop-color="#101010" stop-opacity="0.96"/><stop offset="0.76" stop-color="#333" stop-opacity="0.82"/><stop offset="0.84" stop-color="#5a5a5a" stop-opacity="0.55"/><stop offset="0.92" stop-color="#7a7a7a" stop-opacity="0.25"/><stop offset="0.97" stop-color="#888" stop-opacity="0.08"/><stop offset="1" stop-color="#999" stop-opacity="0"/></radialGradient>
<radialGradient id="gal2" gradientUnits="objectBoundingBox" cx="0.5" cy="0.5" r="0.5"><stop offset="0" stop-color="#000"/><stop offset="0.50" stop-color="#000"/><stop offset="0.58" stop-color="#141414" stop-opacity="0.93"/><stop offset="0.68" stop-color="#3a3a3a" stop-opacity="0.72"/><stop offset="0.80" stop-color="#666" stop-opacity="0.42"/><stop offset="0.92" stop-color="#808080" stop-opacity="0.14"/><stop offset="1" stop-color="#999" stop-opacity="0"/></radialGradient>
<radialGradient id="smudge"><stop offset="0" stop-color="#bbb" stop-opacity="0.55"/><stop offset="1" stop-color="#ccc" stop-opacity="0"/></radialGradient>
<filter id="nzP" x="0" y="0" width="100%" height="100%" color-interpolation-filters="sRGB"><feTurbulence type="fractalNoise" baseFrequency="0.2" numOctaves="2" seed="9"/><feColorMatrix type="matrix" values="0 0 0 0 0.5  0 0 0 0 0.5  0 0 0 0 0.5  1.2 0 0 0 -0.5"/></filter>
<radialGradient id="lfy" gradientUnits="objectBoundingBox"><stop offset="0" stop-color="#3e4a89" stop-opacity="0.75"/><stop offset="1" stop-color="#3e4a89" stop-opacity="0"/></radialGradient>
<radialGradient id="lfd" gradientUnits="objectBoundingBox"><stop offset="0" stop-color="#440154" stop-opacity="0.7"/><stop offset="1" stop-color="#440154" stop-opacity="0"/></radialGradient>
<filter id="bl2" x="-20%" y="-20%" width="140%" height="140%"><feGaussianBlur stdDeviation="0.7"/></filter>
</defs>
<clipPath id="cla"><rect x="70.53" y="532.7" width="147.33" height="147.80"/></clipPath>
<g clip-path="url(#cla)">
<rect x="70.53" y="532.7" width="147.33" height="147.80" fill="#f3f3f3"/>
<rect x="70.53" y="532.7" width="147.33" height="147.80" filter="url(#nzP)" opacity="0.2"/>
<ellipse cx="108.2" cy="542.8" rx="13" ry="9" fill="url(#smudge)"/>
<ellipse cx="80.4" cy="670.4" rx="12" ry="10" fill="url(#smudge)" opacity="0.5"/>
<circle cx="186.8" cy="660.6" r="46.7" fill="url(#gal2)"/>
<circle cx="175.3" cy="675.4" r="58.9" fill="url(#gal)"/>
</g>
<g clip-path="url(#cla)">
<g fill="none" stroke="#555" stroke-width="0.9" stroke-opacity="0.85"><circle cx="132.2" cy="556.2" r="12.28"/><circle cx="157.0" cy="556.2" r="12.28"/><circle cx="96.4" cy="577.3" r="12.28"/><circle cx="121.3" cy="577.3" r="12.28"/><circle cx="145.3" cy="577.3" r="12.28"/><circle cx="169.1" cy="577.3" r="12.28"/><circle cx="193.5" cy="577.3" r="12.28"/><circle cx="109.2" cy="598.1" r="12.28"/><circle cx="181.4" cy="598.1" r="12.28"/><circle cx="96.4" cy="618.7" r="12.28"/><circle cx="121.3" cy="618.7" r="12.28"/><circle cx="193.5" cy="618.7" r="12.28"/><circle cx="109.2" cy="639.8" r="12.28"/><circle cx="133.1" cy="639.8" r="12.28"/><circle cx="157.0" cy="639.8" r="12.28"/><circle cx="181.4" cy="639.8" r="12.28"/><circle cx="145.6" cy="660.6" r="12.28"/></g>
<circle cx="133.1" cy="597.9" r="12.28" fill="none" stroke="#ffa500" stroke-width="1.4"/>
<circle cx="157.3" cy="598.1" r="12.28" fill="none" stroke="#00e600" stroke-width="1.4"/>
<circle cx="145.3" cy="618.7" r="12.28" fill="none" stroke="#0000ff" stroke-width="1.4"/>
<circle cx="169.1" cy="618.7" r="12.28" fill="none" stroke="#ff0000" stroke-width="1.4"/>
<path d="M144.2,603.0 V610.2 M140.6,606.6 H147.8" stroke="#f00" stroke-width="1" fill="none"/>
<rect x="95.1" y="557.5" width="98.2" height="98.2" fill="none" stroke="#f00" stroke-width="1.25"/>
</g>
<text x="144.2" y="545.7" text-anchor="middle" class="s" font-size="9.8" style="fill:#f00">N</text>
<text x="80.0" y="610" text-anchor="middle" class="s" font-size="9.8" style="fill:#f00">E</text>
<rect x="70.53" y="532.7" width="147.33" height="147.80" fill="none" stroke="#262626" stroke-width="0.9"/>
<text x="78.72" y="695.7" text-anchor="middle" class="s" font-size="10.7">−4</text>
<text x="64.93" y="675.98" text-anchor="end" class="s" font-size="10.7">−4</text>
<text x="111.46" y="695.7" text-anchor="middle" class="s" font-size="10.7">−2</text>
<text x="64.93" y="643.24" text-anchor="end" class="s" font-size="10.7">−2</text>
<text x="144.20" y="695.7" text-anchor="middle" class="s" font-size="10.7">0</text>
<text x="64.93" y="610.50" text-anchor="end" class="s" font-size="10.7">0</text>
<text x="176.94" y="695.7" text-anchor="middle" class="s" font-size="10.7">2</text>
<text x="64.93" y="577.76" text-anchor="end" class="s" font-size="10.7">2</text>
<text x="209.68" y="695.7" text-anchor="middle" class="s" font-size="10.7">4</text>
<text x="64.93" y="545.02" text-anchor="end" class="s" font-size="10.7">4</text>
<path d="M78.72,680.5v3.4 M70.53,672.08h-3.4 M111.46,680.5v3.4 M70.53,639.34h-3.4 M144.20,680.5v3.4 M70.53,606.60h-3.4 M176.94,680.5v3.4 M70.53,573.86h-3.4 M209.68,680.5v3.4 M70.53,541.12h-3.4" stroke="#262626" stroke-width="0.8" fill="none"/>
<text x="144.2" y="525.7" text-anchor="middle" class="s" font-size="12.8">Fiber Positions</text>
<text x="144.2" y="706.4" text-anchor="middle" class="s" font-size="10.7">arcsecs</text>
<clipPath id="clb"><rect x="255.73" y="532.7" width="147.33" height="147.80"/></clipPath>
<g clip-path="url(#clb)">
<rect x="255.73" y="532.7" width="147.33" height="147.80" fill="#46307e"/>
<ellipse cx="275.4" cy="649.2" rx="36.0" ry="42.6" fill="url(#lfd)"/>
<ellipse cx="324.5" cy="542.8" rx="49.1" ry="19.6" fill="url(#lfd)"/>
<ellipse cx="388.3" cy="552.6" rx="29.5" ry="26.2" fill="url(#lfy)"/>
<ellipse cx="301.6" cy="591.9" rx="26.2" ry="22.9" fill="url(#lfy)"/>
<ellipse cx="390.0" cy="596.8" rx="19.6" ry="36.0" fill="url(#lfy)"/>
<ellipse cx="332.7" cy="616.4" rx="36.0" ry="26.2" fill="url(#lfy)"/>
<ellipse cx="299.9" cy="675.4" rx="26.2" ry="19.6" fill="url(#lfy)"/>
<ellipse cx="358.9" cy="564.0" rx="32.7" ry="19.6" fill="url(#lfd)"/>
<ellipse cx="260.6" cy="580.4" rx="19.6" ry="32.7" fill="url(#lfd)"/>
<g filter="url(#bl2)">
<polygon points="323.9,657.6 350.7,637.5 370.6,634.8 374.6,640.2 392.7,657.6 394.7,661.0 388.0,674.4 386.8,681.6 328.1,681.6 321.4,661.0" transform="translate(-2.25,-2.25)" fill="#414487" stroke="#414487" stroke-width="25.0" stroke-linejoin="round" opacity="0.5"/>
<polygon points="323.9,657.6 350.7,637.5 370.6,634.8 374.6,640.2 392.7,657.6 394.7,661.0 388.0,674.4 386.8,681.6 328.1,681.6 321.4,661.0" transform="translate(-1.80,-1.80)" fill="#3b528b" stroke="#3b528b" stroke-width="20.0" stroke-linejoin="round" opacity="0.85"/>
<polygon points="323.9,657.6 350.7,637.5 370.6,634.8 374.6,640.2 392.7,657.6 394.7,661.0 388.0,674.4 386.8,681.6 328.1,681.6 321.4,661.0" transform="translate(-1.40,-1.40)" fill="#2c728e" stroke="#2c728e" stroke-width="15.6" stroke-linejoin="round" opacity="1"/>
<polygon points="323.9,657.6 350.7,637.5 370.6,634.8 374.6,640.2 392.7,657.6 394.7,661.0 388.0,674.4 386.8,681.6 328.1,681.6 321.4,661.0" transform="translate(-1.01,-1.01)" fill="#21918c" stroke="#21918c" stroke-width="11.2" stroke-linejoin="round" opacity="1"/>
<polygon points="323.9,657.6 350.7,637.5 370.6,634.8 374.6,640.2 392.7,657.6 394.7,661.0 388.0,674.4 386.8,681.6 328.1,681.6 321.4,661.0" transform="translate(-0.65,-0.65)" fill="#28ae80" stroke="#28ae80" stroke-width="7.2" stroke-linejoin="round" opacity="1"/>
<polygon points="323.9,657.6 350.7,637.5 370.6,634.8 374.6,640.2 392.7,657.6 394.7,661.0 388.0,674.4 386.8,681.6 328.1,681.6 321.4,661.0" transform="translate(-0.32,-0.32)" fill="#5ec962" stroke="#5ec962" stroke-width="3.6" stroke-linejoin="round" opacity="1"/>
</g>
<polygon points="323.9,657.6 350.7,637.5 370.6,634.8 374.6,640.2 392.7,657.6 394.7,661.0 388.0,674.4 386.8,681.6 328.1,681.6 321.4,661.0" fill="#fde725"/>
</g>
<g clip-path="url(#clb)">
<path d="M329.4,568.9 V599.2 M329.4,614.0 V644.3 M291.7,606.6 H322.0 M336.8,606.6 H367.1" stroke="#f00" stroke-width="1.25" fill="none"/>
<rect x="280.3" y="557.5" width="98.2" height="98.2" fill="none" stroke="#f00" stroke-width="1.25"/>
</g>
<text x="329.4" y="545.7" text-anchor="middle" class="s" font-size="9.8" style="fill:#f00">N</text>
<text x="265.2" y="610" text-anchor="middle" class="s" font-size="9.8" style="fill:#f00">E</text>
<rect x="255.73" y="532.7" width="147.33" height="147.80" fill="none" stroke="#262626" stroke-width="0.9"/>
<text x="263.92" y="695.7" text-anchor="middle" class="s" font-size="10.7">−4</text>
<text x="250.13" y="675.98" text-anchor="end" class="s" font-size="10.7">−4</text>
<text x="296.66" y="695.7" text-anchor="middle" class="s" font-size="10.7">−2</text>
<text x="250.13" y="643.24" text-anchor="end" class="s" font-size="10.7">−2</text>
<text x="329.40" y="695.7" text-anchor="middle" class="s" font-size="10.7">0</text>
<text x="250.13" y="610.50" text-anchor="end" class="s" font-size="10.7">0</text>
<text x="362.14" y="695.7" text-anchor="middle" class="s" font-size="10.7">2</text>
<text x="250.13" y="577.76" text-anchor="end" class="s" font-size="10.7">2</text>
<text x="394.88" y="695.7" text-anchor="middle" class="s" font-size="10.7">4</text>
<text x="250.13" y="545.02" text-anchor="end" class="s" font-size="10.7">4</text>
<path d="M263.92,680.5v3.4 M255.73,672.08h-3.4 M296.66,680.5v3.4 M255.73,639.34h-3.4 M329.40,680.5v3.4 M255.73,606.60h-3.4 M362.14,680.5v3.4 M255.73,573.86h-3.4 M394.88,680.5v3.4 M255.73,541.12h-3.4" stroke="#262626" stroke-width="0.8" fill="none"/>
<text x="329.4" y="525.7" text-anchor="middle" class="s" font-size="12.8">Lineflux Map</text>
<text x="329.4" y="706.4" text-anchor="middle" class="s" font-size="10.7">s/b: 3.63 +/- 0.136</text>
<clipPath id="clc"><rect x="440.94" y="532.7" width="147.33" height="147.80"/></clipPath>
<g clip-path="url(#clc)">
<rect x="440.94" y="532.7" width="147.33" height="147.80" fill="#f3f3f3"/>
<rect x="440.94" y="532.7" width="147.33" height="147.80" filter="url(#nzP)" opacity="0.2"/>
<ellipse cx="478.6" cy="542.8" rx="13" ry="9" fill="url(#smudge)"/>
<ellipse cx="450.8" cy="670.4" rx="12" ry="10" fill="url(#smudge)" opacity="0.5"/>
<circle cx="557.2" cy="660.6" r="46.7" fill="url(#gal2)"/>
<circle cx="545.7" cy="675.4" r="58.9" fill="url(#gal)"/>
</g>
<g clip-path="url(#clc)">
<path d="M514.6,568.9 V599.2 M514.6,614.0 V644.3 M476.9,606.6 H507.2 M522.0,606.6 H552.3" stroke="#f00" stroke-width="1.25" fill="none"/>
<circle cx="514.6" cy="606.6" r="47.5" fill="none" stroke="#ffd700" stroke-width="1.5"/>
<ellipse cx="543.2" cy="666.2" rx="29.7" ry="23.6" fill="none" stroke="#fff" stroke-width="1.3" stroke-dasharray="4.2,2"/>
<rect x="465.5" y="557.5" width="98.2" height="98.2" fill="none" stroke="#f00" stroke-width="1.25"/>
</g>
<text x="514.6" y="545.7" text-anchor="middle" class="s" font-size="9.8" style="fill:#f00">N</text>
<text x="450.4" y="610" text-anchor="middle" class="s" font-size="9.8" style="fill:#f00">E</text>
<rect x="440.94" y="532.7" width="147.33" height="147.80" fill="none" stroke="#262626" stroke-width="0.9"/>
<text x="449.12" y="695.7" text-anchor="middle" class="s" font-size="10.7">−4</text>
<text x="435.33" y="675.98" text-anchor="end" class="s" font-size="10.7">−4</text>
<text x="481.86" y="695.7" text-anchor="middle" class="s" font-size="10.7">−2</text>
<text x="435.33" y="643.24" text-anchor="end" class="s" font-size="10.7">−2</text>
<text x="514.60" y="695.7" text-anchor="middle" class="s" font-size="10.7">0</text>
<text x="435.33" y="610.50" text-anchor="end" class="s" font-size="10.7">0</text>
<text x="547.34" y="695.7" text-anchor="middle" class="s" font-size="10.7">2</text>
<text x="435.33" y="577.76" text-anchor="end" class="s" font-size="10.7">2</text>
<text x="580.08" y="695.7" text-anchor="middle" class="s" font-size="10.7">4</text>
<text x="435.33" y="545.02" text-anchor="end" class="s" font-size="10.7">4</text>
<path d="M449.12,680.5v3.4 M440.94,672.08h-3.4 M481.86,680.5v3.4 M440.94,639.34h-3.4 M514.60,680.5v3.4 M440.94,606.60h-3.4 M547.34,680.5v3.4 M440.94,573.86h-3.4 M580.08,680.5v3.4 M440.94,541.12h-3.4" stroke="#262626" stroke-width="0.8" fill="none"/>
<text x="514.6" y="525.7" text-anchor="middle" class="s" font-size="12.8">HSC(26.2) r</text>
<text x="514.6" y="706.4" text-anchor="middle" class="s" font-size="10.7">m:19.6 rc:2.9"  s:0.1"</text>
<text x="514.6" y="718.7" text-anchor="middle" class="s" font-size="10.7">EWr: 1, PLAE: 0.018</text></g>
</svg>
</body></html>
